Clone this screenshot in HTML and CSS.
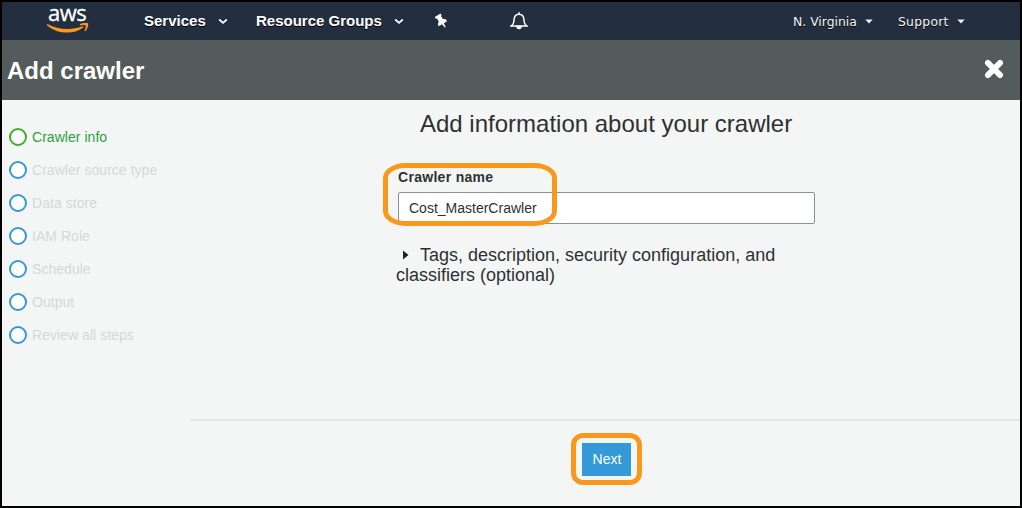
FILE: index.html
```html
<!DOCTYPE html>
<html lang="en">
<head>
<meta charset="utf-8">
<title>Add crawler</title>
<link rel="stylesheet" href="styles.css">
</head>
<body>
<div class="window">
  <nav class="topnav">
    <div class="logo">
      <span class="logo-text">aws</span>
      <svg class="smile" width="42" height="11" viewBox="0 0 42 11" fill="#f8991d"><path d="M.5 1C11 7 25 7.400 35.400 3.300c1-.4 1.700.4.800 1.100C26.500 12 10.500 11.200 .3 2.400c-.6-.6-.3-1.600.2-1.400z"/><path d="M33 1.200c2.700-1.800 7.200-1.900 8-.9.800 1.100-.3 5.300-2.500 7.600-.5.500-1.200.2-.9-.4.700-1.700 1.500-4.200 1-5-.5-.6-3.400-.4-5-.1-.7.100-1.100-.8-.6-1.200z"/></svg>
    </div>
    <div class="menu services">Services<svg width="10" height="7" viewBox="0 0 10 7" fill="none" stroke="#fff" stroke-width="1.800"><path d="M1.200 1.500 5 4.900 8.800 1.500"/></svg></div>
    <div class="menu groups">Resource Groups<svg width="10" height="7" viewBox="0 0 10 7" fill="none" stroke="#fff" stroke-width="1.800"><path d="M1.200 1.500 5 4.900 8.800 1.500"/></svg></div>
    <svg class="pin" width="14" height="15" viewBox="0 0 14 15" fill="#fff"><path d="M.8 4.100 6.500.6 7.700 2.300 6.900 3.100 9 6.100l2.800.1 1.200 2.100-3.100 1.900 1.900 4-1 .3-2.800-3.200-3.300 1.900-.9-2.200 1-2.300-1.700-3.200-1.400.2z"/></svg>
    <svg class="bell" width="18" height="18" viewBox="0 0 18 18" fill="none" stroke="#fff" stroke-width="1.500"><path d="M1.300 13.900c2.300-1.500 2.600-3.200 2.800-6.400C4.300 4.100 6 2.200 9 2.200s4.700 1.900 4.900 5.300c.2 3.200.5 4.900 2.800 6.400z"/><path d="M9 .3v2"/><path fill="#fff" d="M7 14.500h4c0 2.600-4 2.600-4 0z"/></svg>
    <div class="account region">N. Virginia<svg width="8" height="5" viewBox="0 0 8 5" fill="#eee"><path d="M.3.500h7.400L4 4.500z"/></svg></div>
    <div class="account support">Support<svg width="8" height="5" viewBox="0 0 8 5" fill="#eee"><path d="M.3.500h7.400L4 4.500z"/></svg></div>
  </nav>
  <header class="titlebar">
    <h1>Add crawler</h1>
    <svg width="20" height="20" viewBox="0 0 20 20" stroke="#fff" stroke-width="5.800" stroke-linecap="round"><path d="M3.900 3.900 16.100 16.100M16.100 3.900 3.900 16.100"/></svg>
  </header>
  <div class="content">
    <ul class="steps">
      <li class="active"><i></i><span>Crawler info</span></li>
      <li><i></i><span>Crawler source type</span></li>
      <li><i></i><span>Data store</span></li>
      <li><i></i><span>IAM Role</span></li>
      <li><i></i><span>Schedule</span></li>
      <li><i></i><span>Output</span></li>
      <li><i></i><span>Review all steps</span></li>
    </ul>
    <main>
      <section class="form">
        <h2>Add information about your crawler</h2>
        <div class="field">
          <label for="name">Crawler name</label>
          <input id="name" type="text" value="Cost_MasterCrawler">
          <div class="highlight highlight-name"></div>
        </div>
        <p class="optional"><svg width="6" height="10" viewBox="0 0 6 10" fill="#222"><path d="M0 .5 5.500 5 0 9.500z"/></svg>Tags, description, security configuration, and classifiers (optional)</p>
      </section>
      <footer>
        <div class="action">
          <button>Next</button>
          <div class="highlight highlight-next"></div>
        </div>
      </footer>
    </main>
  </div>
</div>
</body>
</html>
```
FILE: styles.css
```css
* { box-sizing: border-box; }
body { margin: 0; font-family: "Liberation Sans", Arial, sans-serif; color: #2e3133; }
.window { width: 1022px; height: 508px; border: 2px solid #000; background: #f4f6f5; display: flex; flex-direction: column; }
svg { display: block; flex: none; }
.topnav { height: 38px; background: #232f3e; display: flex; align-items: flex-start; color: #fff; flex: none; }
.logo { width: 42px; margin-left: 45px; }
.logo-text { display: block; height: 21px; font: 22px/20px "Open Sans", sans-serif; letter-spacing: -0.5px; padding-left: 1px; -webkit-text-stroke: 0.3px #fff; }
.menu { height: 38px; display: flex; align-items: center; font-size: 15px; font-weight: bold; text-shadow: 0 1px 0 #000; white-space: nowrap; padding-bottom: 1px; }
.menu svg { margin-left: 12px; margin-top: 2px; }
.services { width: 112px; margin-left: 55px; }
.groups { width: 178px; }
.pin { margin-top: 11px; }
.bell { margin-left: 62px; margin-top: 10px; }
.account { height: 38px; display: flex; align-items: center; justify-content: space-between; width: 67px; font: 12.400px "DejaVu Sans", Verdana, sans-serif; text-shadow: 0 1px 0 #000; white-space: nowrap; color: #f5f5f5; }
.support { letter-spacing: 0.250px; }
.region { width: 80px; margin-left: 265px; margin-right: 25px; }
.titlebar { height: 60px; flex: none; background: #545b5b; display: flex; align-items: center; justify-content: space-between; padding: 0 16px 0 5px; }
.titlebar h1 { margin: 2px 0 0; font-size: 24px; line-height: 28px; color: #fff; }
.titlebar svg { margin-bottom: 2px; }
.content { flex: 1; display: flex; }
.steps { list-style: none; margin: 0; padding: 20px 0 0 7px; width: 188px; flex: none; }
.steps li { height: 33px; display: flex; align-items: center; gap: 5px; font-size: 14px; color: #d5d8d8; letter-spacing: 0.040px; }
.steps i { width: 18px; height: 18px; border: 2px solid #3499d8; border-radius: 50%; background: #fff; }
.steps .active { color: #2ea043; }
.steps .active i { border-color: #3fae29; }
main { flex: 1; display: flex; flex-direction: column; }
.form { height: 319px; padding: 9px 0 0 206px; }
.form h2 { margin: 0; padding-left: 24px; font-size: 24px; line-height: 30px; font-weight: normal; }
.field { position: relative; width: 419px; margin-top: 29px; padding-left: 2px; }
.field label { display: block; font-size: 14px; line-height: 18px; font-weight: bold; height: 24px; letter-spacing: 0.300px; }
.field input { display: block; width: 417px; height: 32px; padding: 0 10px; border: 1px solid #879196; border-radius: 2px; font: 14px "Liberation Sans", Arial, sans-serif; color: #2e3133; background: #fff; }
.optional { width: 400px; margin: 21px 0 0; font-size: 18px; line-height: 20px; }
.optional svg { display: inline-block; margin: 0 11px 1px 7px; }
footer { border-top: 2px solid #e5e7e7; padding: 22px 0 0 392px; }
.action { position: relative; width: 49px; }
.action button { display: block; width: 49px; height: 33px; border: 0; padding: 0 0 2px 1px; background: #3399d8; color: #fff; font: 14px "Liberation Sans", Arial, sans-serif; }
.highlight { position: absolute; border: 5px solid #f8991d; }
.highlight-name { left: -13px; top: -5px; width: 174px; height: 63px; border-radius: 22px / 15px; }
.highlight-next { left: -11px; top: -10px; width: 71px; height: 52px; border-radius: 12px; }
```
